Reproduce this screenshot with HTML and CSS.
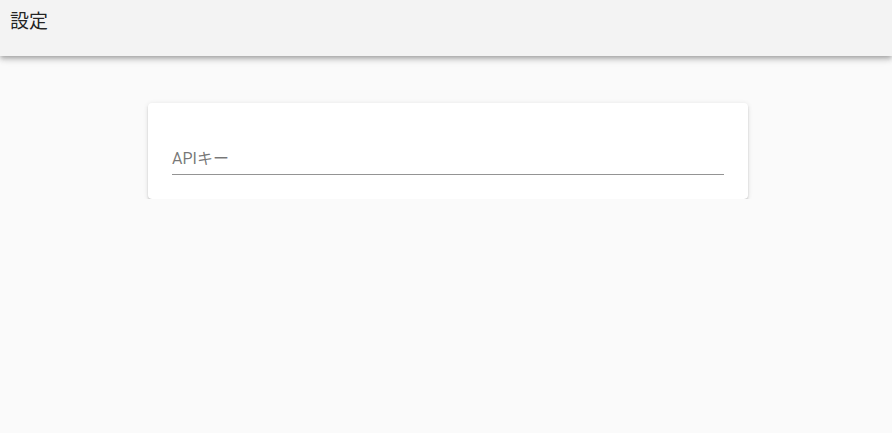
FILE: index.html
```html
<!DOCTYPE html>
<html lang="ja">
<head>
<meta charset="utf-8">
<title>設定</title>
<link rel="stylesheet" href="styles.css">
</head>
<body>
<header class="toolbar">
  <span class="title">設定</span>
</header>
<main class="content">
  <section class="card">
    <div class="field">
      <span class="label">APIキー</span>
    </div>
  </section>
</main>
</body>
</html>
```
FILE: styles.css
```css
html, body {
  margin: 0;
  padding: 0;
  background: #fafafa;
  font-family: Roboto, "Noto Sans CJK JP", sans-serif;
}
.toolbar {
  height: 56px;
  box-sizing: border-box;
  background: #f3f3f3;
  padding: 10px 10px 0;
  box-shadow: 0 2px 4px -1px rgba(0,0,0,.2), 0 4px 5px 0 rgba(0,0,0,.14), 0 1px 10px 0 rgba(0,0,0,.12);
  position: relative;
  z-index: 2;
}
.title {
  display: block;
  font-size: 19px;
  line-height: 24px;
  color: rgba(0,0,0,.87);
}
.content {
  padding: 47px 0 0 148px;
}
.card {
  width: 600px;
  box-sizing: border-box;
  background: #fff;
  border-radius: 4px;
  padding: 24px;
  box-shadow: 0 3px 1px -2px rgba(0,0,0,.2), 0 2px 2px 0 rgba(0,0,0,.14), 0 1px 5px 0 rgba(0,0,0,.12);
}
.field {
  height: 48px;
  box-sizing: border-box;
  display: flex;
  align-items: flex-end;
  padding-bottom: 5px;
  border-bottom: 1px solid rgba(0,0,0,.42);
}
.label {
  font-size: 16px;
  line-height: 20px;
  color: rgba(0,0,0,.54);
}
```
